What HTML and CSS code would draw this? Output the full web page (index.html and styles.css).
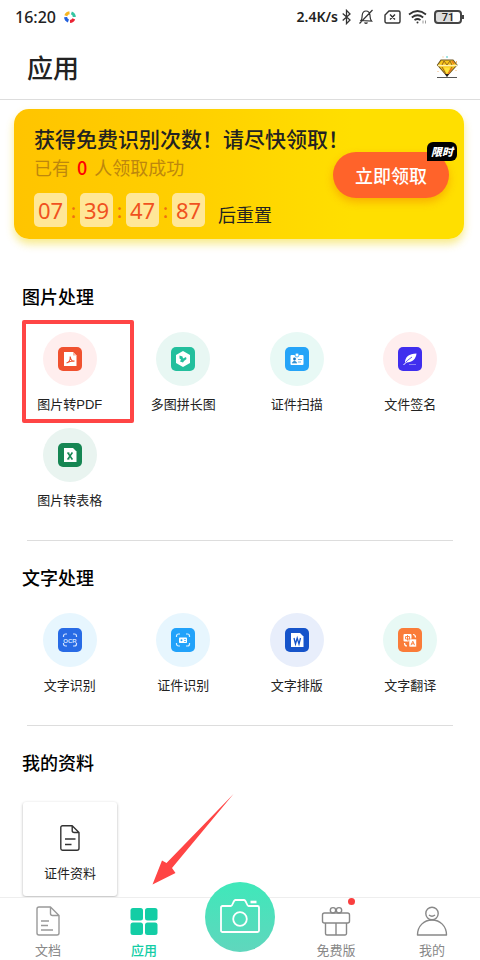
FILE: index.html
```html
<!DOCTYPE html>
<html lang="zh-CN">
<head>
<meta charset="utf-8">
<meta name="viewport" content="width=device-width, initial-scale=1">
<title>应用</title>
<link rel="stylesheet" href="styles.css">
</head>
<body>
<div class="status">
  <span class="status-time">16:20</span>
  <svg class="status-app" width="12" height="12" viewBox="0 0 12 12" fill="none" stroke-width="3">
    <path d="M1.8 4.8A4.4 4.4 0 0 1 5.5 1.7" stroke="#f7b520"/>
    <path d="M7.4 1.8A4.4 4.4 0 0 1 10.3 6" stroke="#35c5a2"/>
    <path d="M9.8 7.8A4.4 4.4 0 0 1 6 10.4" stroke="#ea2434"/>
    <path d="M4.4 10A4.4 4.4 0 0 1 1.6 6.2" stroke="#2260dd"/>
  </svg>
  <span class="status-speed">2.4K/s</span>
  <svg class="status-bt" width="9" height="16" viewBox="0 0 9 16" fill="none" stroke="#333" stroke-width="1.3"><path d="M.7 4.5 8 11 4.5 14.6V1.4L8 5 .7 11.5"/></svg>
  <svg class="status-bell" width="16" height="16" viewBox="0 0 16 16" fill="none" stroke="#333" stroke-width="1.2"><path d="M3 11.5C4.300 10 4 8 4.200 6.300 4.500 3.500 6 2 8 2s3.700 1.500 4 4.300c.2 2 0 4 1.500 5.700zM14.500 1 1.500 14.500M6.500 13.500q1.500 1.500 3 0"/></svg>
  <svg class="status-sim" width="17" height="14" viewBox="0 0 17 14" fill="none" stroke="#333" stroke-width="1.4"><path d="M5 1h9.500a1.500 1.500 0 0 1 1.500 1.500v9a1.500 1.500 0 0 1-1.500 1.500h-12A1.500 1.500 0 0 1 1 11.500V5zM6 4.500l5 5M11 4.500l-5 5"/></svg>
  <svg class="status-wifi" width="20" height="16" viewBox="0 0 20 16" fill="none" stroke="#333" stroke-width="1.7"><path d="M1 5.500q8.500-7 17 0M3.800 8.500q5.700-4.500 11.400 0M6.500 11.200q3-2.400 6 0"/><circle cx="9.500" cy="13.500" r="1" fill="#333" stroke="none"/><path d="M15 11.500v3M17.500 11.500v3" stroke="#999" stroke-width="1"/></svg>
  <span class="battery">71</span>
</div>
<header class="header">
  <h1>应用</h1>
  <a class="gem" href="#vip" aria-label="会员">
    <svg width="24" height="24" viewBox="0 0 24 24">
      <path d="M6 5h12l4 5-10 11L2.500 10z" fill="#f7c61b" stroke="#6d5420" stroke-width="1.100"/>
      <path d="M3 10.500h19" stroke="#fff2ae" stroke-width="1.600"/>
      <path d="M7 12l5 9 5-9M7 10l2-4 3 4 3-4 2 4" fill="none" stroke="#9a681a"/>
      <path d="M9 12.500l3 7 3-7z" fill="#ffe43c"/><path d="M17 13l-4 6M17 6l2 3" stroke="#ed7520" stroke-width="1.300"/>
      <path d="M10 19h4l-2 3z" fill="#222"/><path d="M2 22.500h20" stroke="#555"/>
      <path d="M12 1v2" stroke="#45c8c8"/><path d="M8 1.500v1M21.500 6v2M3 16v1M21 15v1" stroke="#f2b878"/>
    </svg>
  </a>
</header>
<main>
  <section class="banner">
    <h2>获得免费识别次数！请尽快领取！</h2>
    <p class="banner-sub">已有 <b>0</b> 人领取成功</p>
    <div class="timer">
      <span class="cell">07</span><span class="sep">:</span><span class="cell">39</span><span class="sep">:</span><span class="cell">47</span><span class="sep">:</span><span class="cell">87</span>
      <span class="timer-note">后重置</span>
    </div>
    <button class="claim" type="button">立即领取<span class="tag">限时</span></button>
  </section>

  <section class="group">
    <h2>图片处理</h2>
    <div class="grid">
      <a class="tile marked" href="#pdf"><span class="disc rose"><svg viewBox="0 0 24 24"><rect width="24" height="24" rx="5" fill="#f0512f"/><path d="M6 5h9l3.500 3.500V19H6z" fill="#fff"/><path d="M15 5v3.500h3.500" fill="#f9b5a4"/><path d="M8.500 16c2-.5 4-3 3.700-6.500.2 3 1.800 5 4.300 4.500-3-.3-5 .3-8 2" fill="none" stroke="#f0512f" stroke-width="1.100"/></svg></span>图片转PDF</a>
      <a class="tile" href="#long"><span class="disc mint"><svg viewBox="0 0 24 24"><rect width="24" height="24" rx="5" fill="#23bf9d"/><path d="M12 4l7 4v8l-7 4-7-4V8z" fill="#fff"/><path d="M8.500 8.500l3 1 .5 2 3-1.500.5 2-2.500 2-1 1.500-3-1 1-2-1.500-1z" fill="#23bf9d"/></svg></span>多图拼长图</a>
      <a class="tile" href="#scan"><span class="disc aqua"><svg viewBox="0 0 24 24"><rect width="24" height="24" rx="5" fill="#25a4f8"/><rect x="5.500" y="8" width="13" height="10" rx="1" fill="#fff"/><circle cx="12" cy="8" r="2" fill="#fff" stroke="#25a4f8" stroke-width=".8"/><circle cx="9.500" cy="12" r="1.400" fill="#1c75bc"/><path d="M7 16q2.500-4 5 0zM13 12.500h4M13 15h3" fill="#1c75bc" stroke="#55aee7" stroke-width=".9"/></svg></span>证件扫描</a>
      <a class="tile" href="#sign"><span class="disc rose"><svg viewBox="0 0 24 24"><rect width="24" height="24" rx="5" fill="#402eee"/><path d="M7 16C7 10 11 6.500 18.500 6.500 18 12 14 16 7.500 15.500z" fill="#fff"/><path d="M5.500 18Q9 13 14 10" fill="none" stroke="#402eee" stroke-width=".8"/><path d="M5.500 18l3-3" stroke="#fff"/><path d="M11 17.500h7" stroke="#9d96f5" stroke-width=".8"/></svg></span>文件签名</a>
      <a class="tile" href="#sheet"><span class="disc sage"><svg viewBox="0 0 24 24"><rect width="24" height="24" rx="5" fill="#168653"/><path d="M6 5h9l3.500 3.500V19H6z" fill="#fff"/><path d="M10 10l4 6M14 10l-4 6" stroke="#168653" stroke-width="1.500"/><path d="M9 10h2.500M13 10h2M9 16h2.500M13 16h2" stroke="#168653"/></svg></span>图片转表格</a>
    </div>
  </section>

  <section class="group">
    <h2>文字处理</h2>
    <div class="grid">
      <a class="tile" href="#ocr"><span class="disc sky"><svg viewBox="0 0 24 24"><rect width="24" height="24" rx="5" fill="#286be5"/><path d="M5.500 9V8a2 2 0 0 1 2-2H9M15 6h1.500a2 2 0 0 1 2 2v1M18.500 15v1a2 2 0 0 1-2 2H15M9 18H7.500a2 2 0 0 1-2-2v-1" fill="none" stroke="#d2e3ff" stroke-width="1.200"/><text x="12" y="14.500" text-anchor="middle" class="ocr">OCR</text></svg></span>文字识别</a>
      <a class="tile" href="#idocr"><span class="disc sky"><svg viewBox="0 0 24 24"><rect width="24" height="24" rx="5" fill="#22a2fa"/><path d="M5.500 9V8a2 2 0 0 1 2-2H9M15 6h1.500a2 2 0 0 1 2 2v1M18.500 15v1a2 2 0 0 1-2 2H15M9 18H7.500a2 2 0 0 1-2-2v-1" fill="none" stroke="#d8f0ff" stroke-width="1.200"/><rect x="8" y="9.500" width="8" height="5.500" rx=".8" fill="#fff"/><circle cx="10.500" cy="12.200" r="1" fill="#22a2fa"/><path d="M13 11.500h2M13 13.500h2" stroke="#22a2fa" stroke-width=".7"/></svg></span>证件识别</a>
      <a class="tile" href="#word"><span class="disc lilac"><svg viewBox="0 0 24 24"><rect width="24" height="24" rx="5" fill="#1654ca"/><path d="M6 5h9l3.500 3.500V19H6z" fill="#fff"/><path d="M9 10l1.500 6L12.200 10l1.800 6 1.500-6" fill="none" stroke="#1654ca" stroke-width="1.300"/></svg></span>文字排版</a>
      <a class="tile" href="#translate"><span class="disc aqua"><svg viewBox="0 0 24 24"><rect width="24" height="24" rx="5" fill="#fa7c39"/><rect x="5.500" y="6" width="8" height="7.500" rx="1" fill="#fff"/><rect x="11" y="11" width="7.500" height="8" rx="1" fill="#fff" stroke="#fa7c39" stroke-width=".6"/><path d="M7.500 8.500h4v2.500h-4zM9.500 7v5.500M13 17.200l1.800-4 1.800 4M13.500 15.800h2.500" fill="none" stroke="#fa7c39" stroke-width=".9"/><path d="M15 6.500q2.500 0 2.500 3M9 18q-2.500 0-2.500-3" fill="none" stroke="#fff" stroke-width="1.200"/></svg></span>文字翻译</a>
    </div>
  </section>

  <section class="group">
    <h2>我的资料</h2>
    <a class="card" href="#docs">
      <svg width="20" height="26" viewBox="0 0 20 26" fill="none" stroke="#333" stroke-width="1.400" stroke-linejoin="round"><path d="M2.500.800h9.700L19 7.500v15.700a2 2 0 0 1-2 2H2.500a1.700 1.700 0 0 1-1.700-1.700v-21A1.700 1.700 0 0 1 2.500.800zM12.200 1v4.500a2 2 0 0 0 2 2H19M5 14h10.500M5 19.500h6.500"/></svg>
      证件资料
    </a>
  </section>
</main>
<nav class="tabs">
  <a class="tab" href="#doc"><svg width="32" height="32" viewBox="0 0 32 32" fill="none" stroke="#999" stroke-width="1.400" stroke-linejoin="round"><path d="M7 2h11.500L27 10.500V28a2 2 0 0 1-2 2H7a2 2 0 0 1-2-2V4a2 2 0 0 1 2-2zM18.500 2v6.500a2 2 0 0 0 2 2H27M9 16h8M9 20.500h7M9 25h12"/></svg>文档</a>
  <a class="tab active" href="#apps" aria-current="page"><svg width="32" height="32" viewBox="0 0 32 32" fill="#13cda5"><rect x="2.500" y="3" width="12.500" height="12.500" rx="2.500"/><rect x="17" y="3" width="12.500" height="12.500" rx="2.500"/><rect x="2.500" y="17.500" width="12.500" height="12.500" rx="2.500"/><rect x="17" y="17.500" width="12.500" height="12.500" rx="2.500"/></svg>应用</a>
  <div class="tab"><button class="shutter" type="button" aria-label="拍照"><svg width="42" height="38" viewBox="0 0 42 38" fill="none" stroke="#fff" stroke-width="1.800" stroke-linejoin="round"><path d="M3.500 8H12c2 0 2-6 4.500-6h8.500c2.500 0 2.500 6 4.500 6h9a1.500 1.500 0 0 1 1.500 1.500v23a1.500 1.500 0 0 1-1.500 1.500h-35A1.500 1.500 0 0 1 2 32.500v-23A1.500 1.500 0 0 1 3.500 8z"/><circle cx="21" cy="21" r="6.800"/><path d="M31.500 4h6" stroke-width="2.600"/></svg></button></div>
  <a class="tab" href="#free"><span class="with-dot"><svg width="32" height="32" viewBox="0 0 32 32" fill="none" stroke="#888" stroke-width="1.400"><rect x="2.500" y="8" width="27" height="10" rx="2"/><path d="M5.500 18v10.500a1.500 1.500 0 0 0 1.500 1.500h18a1.500 1.500 0 0 0 1.500-1.500V18M16 18v12"/><circle cx="13" cy="5.300" r="2.700"/><circle cx="19" cy="5.300" r="2.700"/></svg></span>免费版</a>
  <a class="tab" href="#me"><svg width="32" height="32" viewBox="0 0 32 32" fill="none" stroke="#888" stroke-width="1.400"><circle cx="16" cy="8.500" r="6.200"/><path d="M13 10q3 2.500 6 0M1.500 30C1.500 21 8 15 16 15s14.500 6 14.500 15z" stroke-linejoin="round"/></svg>我的</a>
  <svg class="arrow" width="82" height="91" viewBox="0 0 82 91"><path d="M.5 90.500 10 66.500l4.500 2.500L81.500 0 20 74l3.500 5z" fill="#ff4545"/></svg>
</nav>
</body>
</html>
```
FILE: styles.css
```css
* { box-sizing: border-box; }

body {
  margin: 0;
  min-height: 100vh;
  display: flex;
  flex-direction: column;
  background: #fff;
  color: #222;
  font-family: "Noto Sans CJK SC", sans-serif;
  font-size: 13px;
  line-height: 20px;
}

h1, h2, p { margin: 0; }
a { color: inherit; text-decoration: none; }
button { border: 0; padding: 0; font: inherit; cursor: pointer; }
svg { display: block; }

.status {
  display: flex;
  align-items: center;
  height: 34px;
  padding: 0 15px;
  color: #222;
}
.status-time { font: 500 16px/20px "Noto Sans", sans-serif; }
.status-app { margin-left: 8px; }
.status-speed { margin-left: auto; font: 600 14px/20px "Noto Sans", sans-serif; }
.status-bt { margin-left: 4px; }
.status-bell { margin-left: 7px; }
.status-sim { margin-left: 10px; }
.status-wifi { margin-left: 7px; }
.battery {
  position: relative;
  width: 28px;
  height: 14px;
  margin: 0 3px 0 6px;
  border: 2px solid #444;
  border-radius: 4px;
  background: linear-gradient(90deg, #ddd 70%, #fff 70%);
  font: 500 11px/11px Roboto, sans-serif;
  text-align: center;
}
.battery::after {
  content: "";
  position: absolute;
  right: -4px;
  top: 3px;
  width: 2px;
  height: 4px;
  background: #444;
}

.header {
  display: flex;
  align-items: center;
  justify-content: space-between;
  height: 66px;
  padding: 0 21px 0 27px;
  border-bottom: 1px solid #ddd;
}
.header h1 { font-size: 26px; font-weight: 500; line-height: 40px; }

main { flex: 1; padding-top: 9px; }

.banner {
  position: relative;
  height: 130px;
  margin: 0 16px 45px 14px;
  padding: 15px 20px 0;
  border-radius: 15px;
  background: linear-gradient(90deg, #ffc400, #ffd000 40%, #ffdf00 75%, #ffdf00);
  box-shadow: 0 5px 8px rgba(240, 210, 0, .45);
}
.banner h2 { font-size: 21px; font-weight: 500; line-height: 28px; white-space: nowrap; }
.banner-sub { color: #bd870d; font-size: 18px; line-height: 30px; }
.banner-sub b { margin: 0 3px; color: #f00; font-weight: 500; }
.timer { display: flex; align-items: center; margin-top: 11px; }
.cell {
  width: 33px;
  height: 34px;
  border-radius: 5px;
  background: #ffe798;
  color: #f0521e;
  font: 22px/34px "Noto Sans", sans-serif;
  text-align: center;
}
.sep { width: 13px; color: #ee7013; font-size: 20px; line-height: 30px; text-align: center; }
.timer-note { align-self: flex-end; margin-left: 13px; font-size: 18px; line-height: 26px; }
.claim {
  position: absolute;
  right: 15px;
  top: 43px;
  width: 116px;
  height: 46px;
  border-radius: 23px;
  background: #ff632a;
  box-shadow: 0 4px 8px rgba(240, 120, 0, .45);
  color: #fff;
  font-size: 18px;
  font-weight: 500;
}
.tag {
  position: absolute;
  right: -8px;
  top: -10px;
  width: 30px;
  height: 19px;
  border-radius: 6px 6px 6px 0;
  background: #000;
  font-size: 11px;
  font-style: italic;
  font-weight: 900;
  line-height: 19px;
}

.group h2 { padding: 0 22px; color: #000; font-size: 18px; font-weight: 500; line-height: 24px; }
.group + .group::before {
  content: "";
  display: block;
  height: 1px;
  margin: 29px 27px 24px;
  background: #ddd;
}
.grid {
  display: grid;
  grid-template-columns: repeat(4, 1fr);
  row-gap: 13px;
  padding: 24px 13px 0;
}
.tile {
  position: relative;
  display: flex;
  flex-direction: column;
  align-items: center;
  gap: 9px;
  font-family: "Liberation Sans", "Noto Sans CJK SC", sans-serif;
}
.marked::after {
  content: "";
  position: absolute;
  inset: -12px -7px -8px 9px;
  border: 4px solid #ff4545;
  border-radius: 2px;
}
.disc {
  display: grid;
  place-items: center;
  width: 54px;
  height: 54px;
  border-radius: 50%;
}
.disc svg { width: 24px; height: 24px; }
.rose { background: #ffeeee; }
.mint { background: #e8f7f3; }
.aqua { background: #e8f9f5; }
.sage { background: #e9f4f0; }
.sky { background: #e7f6fe; }
.lilac { background: #e8eefb; }
.ocr { font: 700 6px "Liberation Sans", sans-serif; fill: #d2e3ff; }

.card {
  display: flex;
  flex-direction: column;
  align-items: center;
  justify-content: flex-end;
  gap: 12px;
  width: 94px;
  height: 94px;
  margin: 28px 0 1px 23px;
  padding-bottom: 13px;
  border-radius: 3px;
  box-shadow: 0 1px 3px rgba(0, 0, 0, .3);
}

.tabs {
  position: sticky;
  bottom: 0;
  display: grid;
  grid-template-columns: repeat(5, 1fr);
  height: 63px;
  border-top: 1px solid #eee;
  background: #fff;
  color: #888;
}
.tab {
  position: relative;
  display: flex;
  flex-direction: column;
  align-items: center;
  gap: 3px;
  padding-top: 7px;
}
.active { color: #13cda5; font-weight: 500; }
.with-dot { position: relative; }
.with-dot::after {
  content: "";
  position: absolute;
  right: -3px;
  top: -7px;
  width: 7px;
  height: 7px;
  border-radius: 50%;
  background: #fa3e3e;
}
.shutter {
  position: absolute;
  top: -16px;
  display: grid;
  place-items: center;
  width: 70px;
  height: 70px;
  border-radius: 50%;
  background: linear-gradient(#3fe8ba, #60d6bd);
}
.arrow { position: absolute; left: 152px; bottom: 75px; pointer-events: none; }
```
